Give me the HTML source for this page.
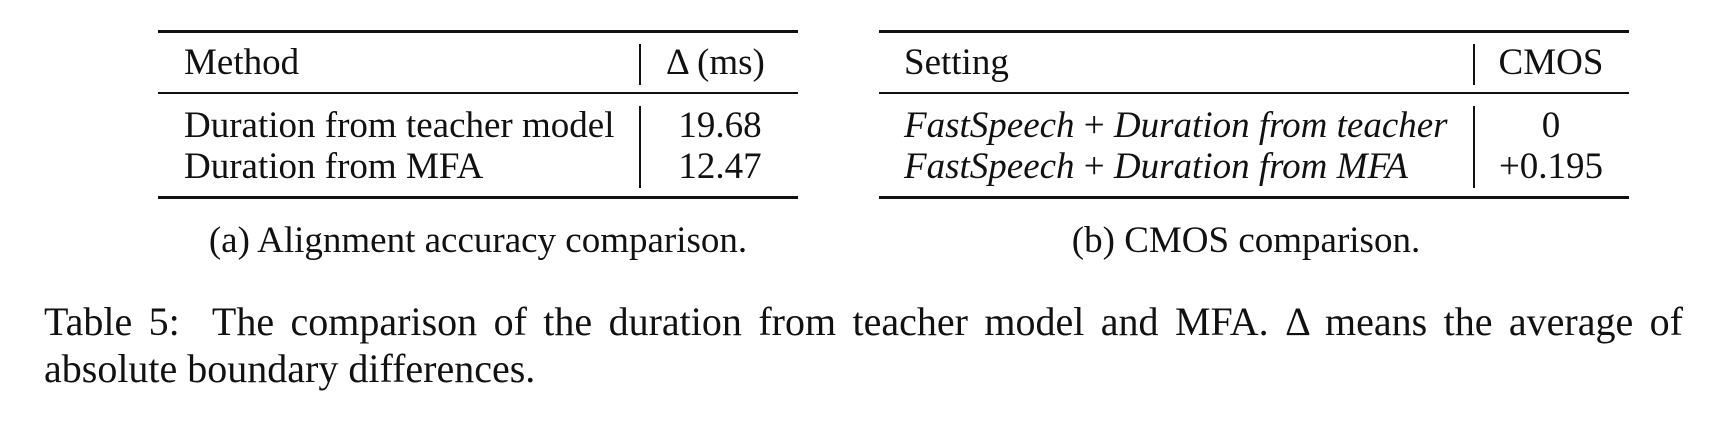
<!DOCTYPE html>
<html><head><meta charset="utf-8"><style>
body{margin:0;width:1720px;height:424px;background:#fff;position:relative;overflow:hidden;font-family:"Liberation Serif",serif;font-size:37px;color:#111}
.t{position:absolute;white-space:nowrap;line-height:1}
.r{position:absolute;background:#111}
i{font-style:italic}
</style></head><body>
<div class="r" style="left:158px;top:30px;width:640px;height:3px"></div>
<div class="r" style="left:158px;top:92px;width:640px;height:2px"></div>
<div class="r" style="left:158px;top:196px;width:640px;height:3px"></div>
<div class="r" style="left:639px;top:44px;width:1.5px;height:41px"></div>
<div class="r" style="left:639px;top:106px;width:1.5px;height:82px"></div>
<div class="t" style="left:184px;top:44px">Method</div>
<div class="t" style="left:666px;top:44px">Δ (ms)</div>
<div class="t" style="left:184px;top:107px">Duration from teacher model</div>
<div class="t" style="left:184px;top:148px">Duration from MFA</div>
<div class="t" style="left:720px;top:107px;transform:translateX(-50%)">19.68</div>
<div class="t" style="left:720px;top:148px;transform:translateX(-50%)">12.47</div>
<div class="t" style="left:478px;top:222px;transform:translateX(-50%)">(a) Alignment accuracy comparison.</div>
<div class="r" style="left:879px;top:30px;width:750px;height:3px"></div>
<div class="r" style="left:879px;top:92px;width:750px;height:2px"></div>
<div class="r" style="left:879px;top:196px;width:750px;height:3px"></div>
<div class="r" style="left:1473px;top:44px;width:1.5px;height:41px"></div>
<div class="r" style="left:1473px;top:106px;width:1.5px;height:82px"></div>
<div class="t" style="left:904px;top:44px">Setting</div>
<div class="t" style="left:1551px;top:44px;transform:translateX(-50%)">CMOS</div>
<div class="t" style="left:904px;top:107px"><i>FastSpeech</i> + <i>Duration from teacher</i></div>
<div class="t" style="left:904px;top:148px"><i>FastSpeech</i> + <i>Duration from MFA</i></div>
<div class="t" style="left:1551px;top:107px;transform:translateX(-50%)">0</div>
<div class="t" style="left:1551px;top:148px;transform:translateX(-50%)">+0.195</div>
<div class="t" style="left:1246px;top:222px;transform:translateX(-50%)">(b) CMOS comparison.</div>
<div class="t" style="left:44px;top:302px;width:1639px;font-size:40px;text-align:justify;text-align-last:justify">Table 5:&nbsp; The comparison of the duration from teacher model and MFA. Δ means the average of</div>
<div class="t" style="left:44px;top:349px;font-size:40px">absolute boundary differences.</div>
</body></html>
